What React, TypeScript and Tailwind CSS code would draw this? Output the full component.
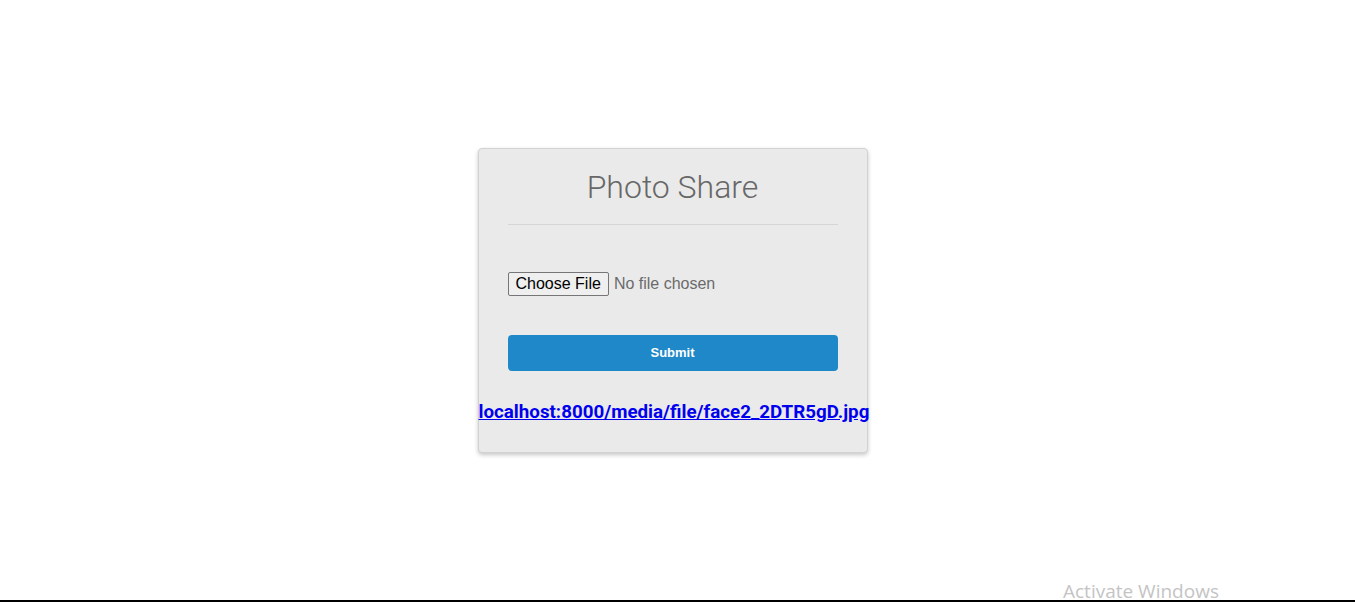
const App = () => {
  return (
    <div className="relative flex h-[602px] w-full justify-center border-b-2 border-black bg-white pr-[10px] pt-[148px]">
      <div className="flex h-[305px] w-[390px] flex-col rounded-[4px] border border-[#d2d2d2] bg-[#eaeaea] pb-[28px] pt-[19px] shadow-[0_2px_4px_rgba(0,0,0,0.22)]">
        <div className="px-[29px]">
          <h1 className="text-center font-['Roboto',sans-serif] text-[32px] font-light leading-[38px] text-[#676767]">
            Photo Share
          </h1>
          <hr className="mt-[18px] border-t border-[#d6d6d6]" />
          <form className="flex flex-col">
            <input
              type="file"
              className="mt-[47px] font-['Liberation_Sans',Arial,sans-serif] text-[16px] leading-[22px] text-[#6a6a6a] file:mr-[5px] file:rounded-[2px] file:border file:border-solid file:border-[#767676] file:bg-[#efefef] file:px-[7px] file:py-0 file:text-black"
            />
            <button
              type="button"
              className="mt-[39px] h-[36px] w-full rounded-[4px] bg-[#1e88c9] font-['Liberation_Sans',Arial,sans-serif] text-[13px] font-bold text-white"
            >
              Submit
            </button>
          </form>
        </div>
        <a
          href="#"
          className="mt-[29px] block whitespace-nowrap text-center font-['Roboto',sans-serif] text-[18.75px] font-bold leading-[24px] text-[#0000ee] underline"
        >
          localhost:8000/media/file/face2_2DTR5gD.jpg
        </a>
      </div>
      <span className="absolute left-[1063px] top-[578px] font-['Open_Sans',sans-serif] text-[19px] leading-[26px] text-[#c4c4c4]">
        Activate Windows
      </span>
    </div>
  );
};

export default App;
